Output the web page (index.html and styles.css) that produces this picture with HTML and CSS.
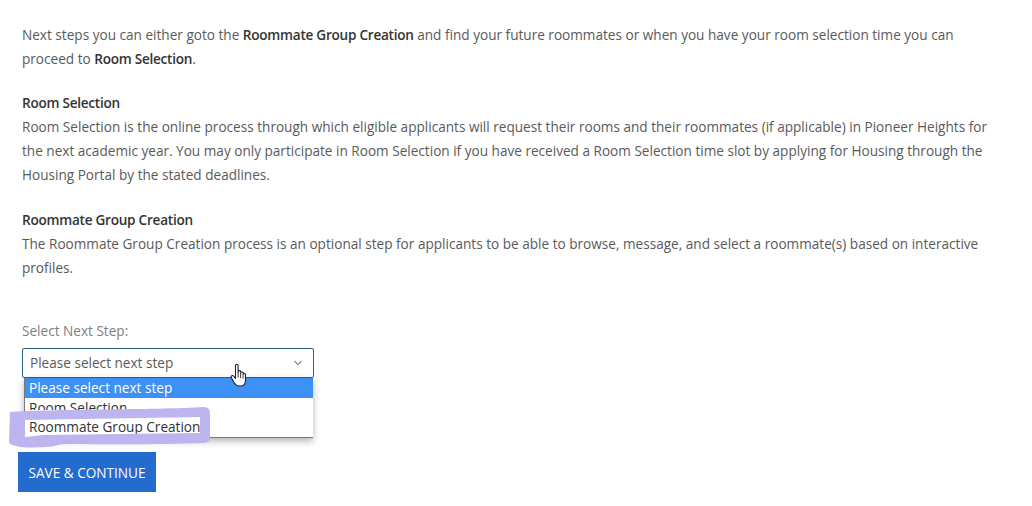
FILE: index.html
```html
<!DOCTYPE html>
<html lang="en">
<head>
<meta charset="utf-8">
<title>Select Next Step</title>
<link rel="stylesheet" href="styles.css">
</head>
<body>
<main class="page">
  <section class="copy">
    <p>Next steps you can either goto the <b>Roommate Group Creation</b> and find your future roommates or when you have your room selection time you can proceed to <b>Room Selection</b>.</p>
    <p class="wide-gap"><b>Room Selection</b><br>Room Selection is the online process through which eligible applicants will request their rooms and their roommates (if applicable) in Pioneer Heights for the next academic year. You may only participate in Room Selection if you have received a Room Selection time slot by applying for Housing through the Housing Portal by the stated deadlines.</p>
    <p><b>Roommate Group Creation</b><br>The Roommate Group Creation process is an optional step for applicants to be able to browse, message, and select a roommate(s) based on interactive profiles.</p>
  </section>
  <form class="step-form">
    <div class="label">Select Next Step:</div>
    <div class="select-wrap">
      <div class="select">
        <span>Please select next step</span>
        <svg class="chevron" width="10" height="6" viewBox="0 0 10 6"><path d="M1.5 1 5 4.6 8.5 1" fill="none" stroke="#888" stroke-width="1.2"/></svg>
      </div>
      <ul class="menu">
        <li class="active">Please select next step</li>
        <li class="clipped">Room Selection</li>
        <li class="last">Roommate Group Creation</li>
      </ul>
      <svg class="scribble" width="210" height="46" viewBox="0 0 210 46">
        <path fill-rule="evenodd" d="M4 8C40 5 150 6 198 3Q204 3 204 9L204 34C204 38 200 39 196 39C150 41 90 40 60 40C50 40 50 43 40 43C25 44 5 44 3 38ZM19 16 194 13 194 29 37 31Q28 32 19 33Z" fill="#bdb5f0"/>
      </svg>
      <svg class="hand" width="18" height="26" viewBox="0 0 18 26">
        <path d="M5.5 2.500c0-1.700 2.600-1.700 2.600 0v7l.2-1c.3-1.300 2.400-1.200 2.500.2v1c.4-1.200 2.400-1 2.500.4v1c.5-1 2.200-.7 2.200.7v5.400c0 3-1.500 5.800-5 5.800H9c-2.500 0-3.700-1.300-5-3.500L1.300 14.500c-.8-1.500 1.200-2.700 2.300-1.300l1.900 2.300Z" fill="#fff" stroke="#222" stroke-width="1.100" stroke-linejoin="round"/>
        <path d="M8.100 9.500v5M10.600 10v5M13.100 11v4.500" stroke="#222" stroke-width=".9" fill="none"/>
      </svg>
    </div>
    <button class="save" type="button">SAVE &amp; CONTINUE</button>
  </form>
</main>
</body>
</html>
```
FILE: styles.css
```css
* { box-sizing: border-box; }
html, body { margin: 0; padding: 0; background: #fff; }
body {
  width: 1032px;
  height: 506px;
  overflow: hidden;
  font-family: "Open Sans", "Liberation Sans", sans-serif;
  font-size: 13.6px;
  line-height: 24px;
  color: #5a5a5a;
}
.page { padding: 23px 32px 0 22px; }
.copy p { margin: 0 0 20px; }
.copy p.wide-gap { margin-bottom: 21px; }
.copy b { font-weight: 600; letter-spacing: -0.26px; color: #333; }
.step-form { margin-top: 39px; }
.label { line-height: 24px; color: #808080; }
.select-wrap { position: relative; width: 292px; margin-top: 5px; }
.select {
  height: 30px;
  border: 1px solid #2c628f;
  border-radius: 2px;
  padding: 0 10px 0 7px;
  display: flex;
  align-items: center;
  justify-content: space-between;
  line-height: 28px;
}
.menu {
  position: absolute;
  left: 2px;
  top: 30px;
  width: 289px;
  height: 60px;
  margin: 0;
  padding: 0;
  list-style: none;
  background: #fff;
  color: #333;
  border-left: 1px solid #777;
  border-bottom: 1px solid #777;
  box-shadow: 0 3px 7px rgba(0,0,0,.3);
  overflow: hidden;
  line-height: 20px;
}
.menu li { padding-left: 4px; height: 20px; white-space: nowrap; }
.menu .active { background: #3d90f5; color: #fff; }
.menu .clipped { height: 12px; overflow: hidden; }
.menu .last { margin-top: 7px; }
.scribble { position: absolute; left: -16px; top: 56px; }
.hand { position: absolute; left: 208px; top: 15px; }
.save {
  display: block;
  margin: 74px 0 0 -4px;
  width: 138px;
  height: 40px;
  border: 0;
  padding: 0;
  background: #236bcf;
  color: #fff;
  font: 13.6px "Open Sans", "Liberation Sans", sans-serif;
}
```
